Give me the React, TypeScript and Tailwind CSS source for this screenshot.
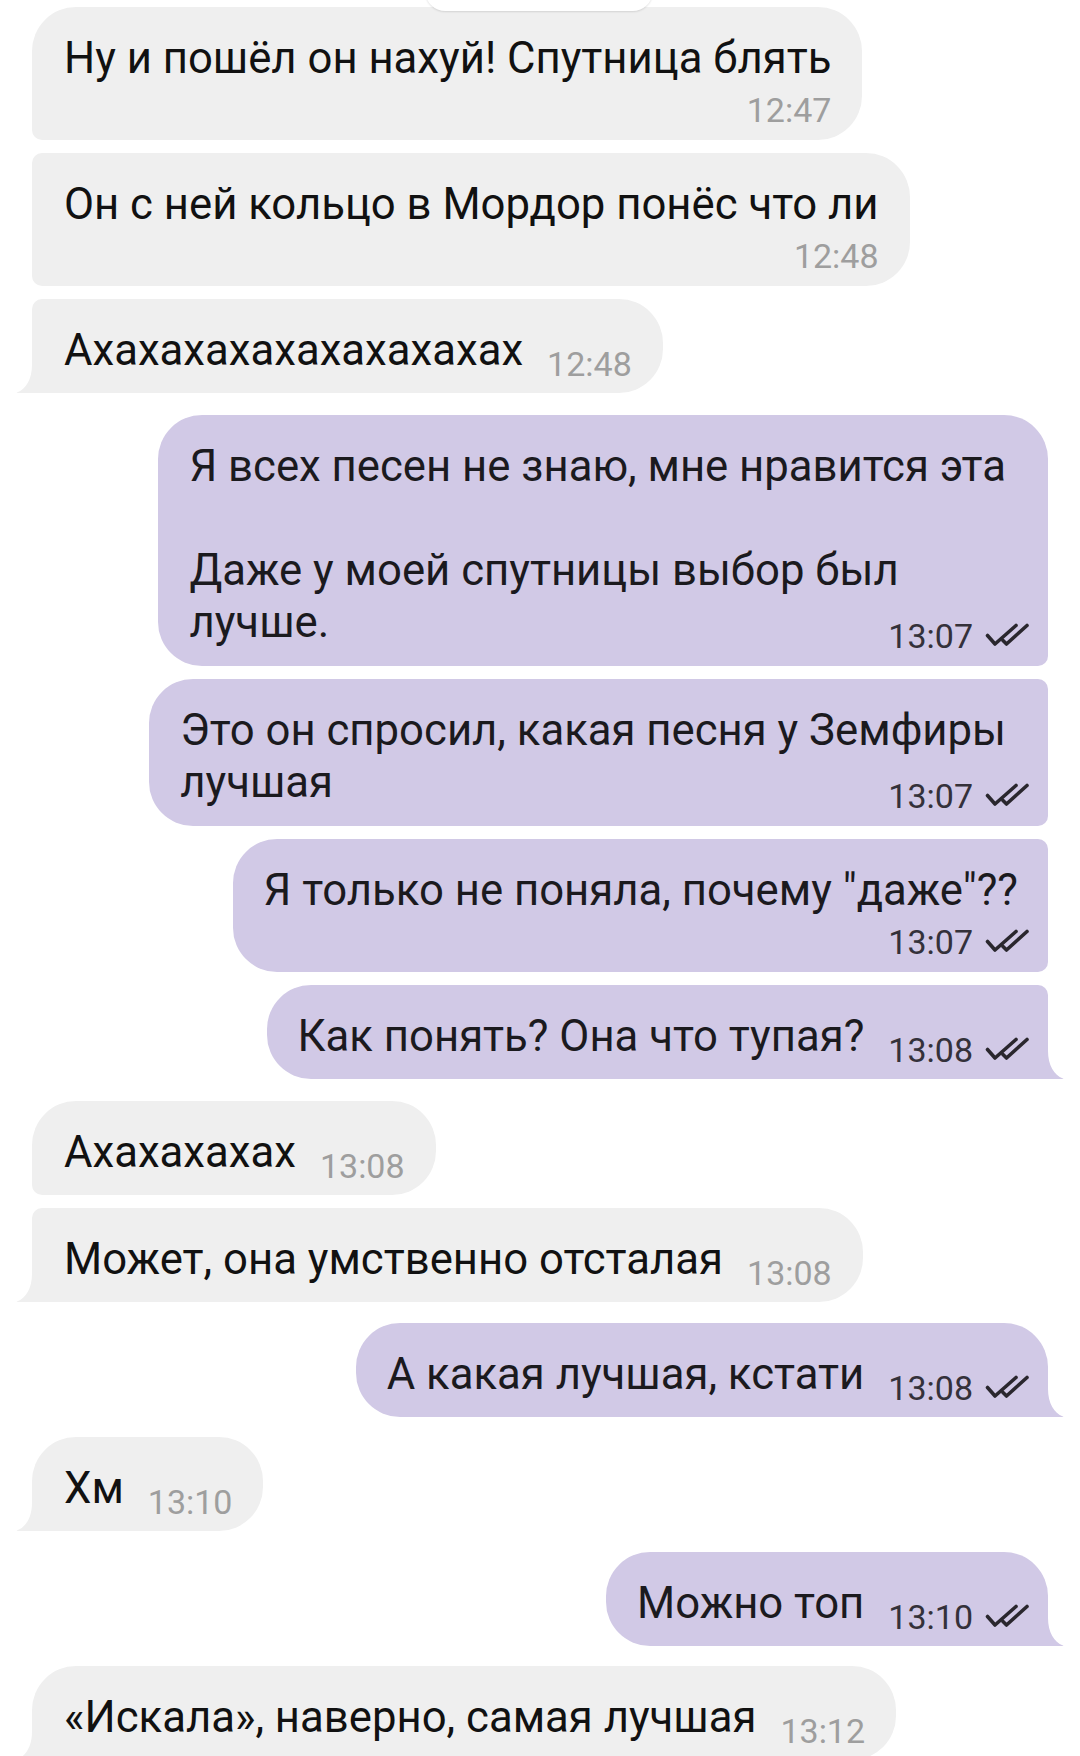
import React from 'react';

type Side = 'in' | 'out';
type Pos = 'first' | 'middle' | 'last' | 'single';
type Layout = 'inline' | 'stacked' | 'overlap';

interface Message {
  side: Side;
  text: string;
  time: string;
  layout: Layout;
  pos: Pos;
  gap: string;
}

const messages: Message[] = [
  { side: 'in', text: 'Ну и пошёл он нахуй! Спутница блять', time: '12:47', layout: 'stacked', pos: 'first', gap: '' },
  { side: 'in', text: 'Он с ней кольцо в Мордор понёс что ли', time: '12:48', layout: 'stacked', pos: 'middle', gap: 'mt-[13px]' },
  { side: 'in', text: 'Ахахахахахахахахахах', time: '12:48', layout: 'inline', pos: 'last', gap: 'mt-[13px]' },
  { side: 'out', text: 'Я всех песен не знаю, мне нравится эта\n\nДаже у моей спутницы выбор был\nлучше.', time: '13:07', layout: 'overlap', pos: 'first', gap: 'mt-[22px]' },
  { side: 'out', text: 'Это он спросил, какая песня у Земфиры\nлучшая', time: '13:07', layout: 'overlap', pos: 'middle', gap: 'mt-[13px]' },
  { side: 'out', text: 'Я только не поняла, почему "даже"??', time: '13:07', layout: 'stacked', pos: 'middle', gap: 'mt-[13px]' },
  { side: 'out', text: 'Как понять? Она что тупая?', time: '13:08', layout: 'inline', pos: 'last', gap: 'mt-[13px]' },
  { side: 'in', text: 'Ахахахахах', time: '13:08', layout: 'inline', pos: 'first', gap: 'mt-[22px]' },
  { side: 'in', text: 'Может, она умственно отсталая', time: '13:08', layout: 'inline', pos: 'last', gap: 'mt-[13px]' },
  { side: 'out', text: 'А какая лучшая, кстати', time: '13:08', layout: 'inline', pos: 'single', gap: 'mt-[21px]' },
  { side: 'in', text: 'Хм', time: '13:10', layout: 'inline', pos: 'single', gap: 'mt-[20px]' },
  { side: 'out', text: 'Можно топ', time: '13:10', layout: 'inline', pos: 'single', gap: 'mt-[21px]' },
  { side: 'in', text: '«Искала», наверно, самая лучшая', time: '13:12', layout: 'inline', pos: 'single', gap: 'mt-[20px]' },
];

const radiusFor = (side: Side, pos: Pos) => {
  if (side === 'in') {
    switch (pos) {
      case 'first':
        return 'rounded-tl-[44px] rounded-tr-[44px] rounded-br-[44px] rounded-bl-[10px]';
      case 'middle':
        return 'rounded-tl-[10px] rounded-tr-[44px] rounded-br-[44px] rounded-bl-[10px]';
      case 'last':
        return 'rounded-tl-[10px] rounded-tr-[44px] rounded-br-[44px] rounded-bl-none';
      default:
        return 'rounded-tl-[44px] rounded-tr-[44px] rounded-br-[44px] rounded-bl-none';
    }
  }
  switch (pos) {
    case 'first':
      return 'rounded-tl-[44px] rounded-tr-[44px] rounded-br-[10px] rounded-bl-[44px]';
    case 'middle':
      return 'rounded-tl-[44px] rounded-tr-[10px] rounded-br-[10px] rounded-bl-[44px]';
    case 'last':
      return 'rounded-tl-[44px] rounded-tr-[10px] rounded-br-none rounded-bl-[44px]';
    default:
      return 'rounded-tl-[44px] rounded-tr-[44px] rounded-br-none rounded-bl-[44px]';
  }
};

function DoubleCheck() {
  return (
    <svg className="w-[44px] h-[24px] mb-[4px]" viewBox="0 0 44 24" fill="none" stroke="#2a272e" strokeWidth={3.6} strokeLinecap="round" strokeLinejoin="round">
      <path d="M2.5 12.5 L10 21 L31 2.5" />
      <path d="M18 17.5 L21.5 21 L42 2.5" />
    </svg>
  );
}

function Tail({ side }: { side: Side }) {
  if (side === 'in') {
    return (
      <svg className="absolute left-[-16px] bottom-0 w-[18px] h-[28px] fill-[#efefef]" viewBox="0 0 18 28">
        <path d="M16 0 C16 14 10 24 1 27.5 Q0 28 1.5 28 L18 28 L18 0 Z" />
      </svg>
    );
  }
  return (
    <svg className="absolute right-[-16px] bottom-0 w-[18px] h-[28px] fill-[#d1c9e6]" viewBox="0 0 18 28">
      <path d="M2 0 C2 14 8 24 17 27.5 Q18 28 16.5 28 L0 28 L0 0 Z" />
    </svg>
  );
}

function Time({ side, time }: { side: Side; time: string }) {
  if (side === 'in') {
    return <span className="text-[34px] leading-[39px] text-[#9e9e9e]">{time}</span>;
  }
  return (
    <span className="flex items-center gap-[12px] text-[34px] leading-[39px] text-[#34313a]">
      {time}
      <DoubleCheck />
    </span>
  );
}

function Bubble({ msg }: { msg: Message }) {
  const bg = msg.side === 'in' ? 'bg-[#efefef]' : 'bg-[#d1c9e6]';
  const padX = msg.side === 'in' ? 'pl-[32px] pr-[31px]' : 'pl-[31px] pr-[19px]';
  const textCls = `text-[43.7px] leading-[52px] whitespace-pre ${msg.side === 'in' ? 'text-[#111111]' : 'text-[#1b1a1e]'}`;
  const hasTail = msg.pos === 'last' || msg.pos === 'single';

  let body: React.ReactNode;
  let padB = 'pb-[17px]';

  if (msg.layout === 'inline') {
    body = (
      <div className="flex items-end">
        <span className={textCls}>{msg.text}</span>
        <div className="ml-[24px] -mb-[8px]">
          <Time side={msg.side} time={msg.time} />
        </div>
      </div>
    );
  } else if (msg.layout === 'stacked') {
    padB = 'pb-[10px]';
    body = (
      <div className="flex flex-col">
        <span className={`${textCls} ${msg.side === 'out' ? 'mr-[11px]' : ''}`}>{msg.text}</span>
        <div className="self-end mt-[7px]">
          <Time side={msg.side} time={msg.time} />
        </div>
      </div>
    );
  } else {
    // time shares the row of the last (short) line
    padB = 'pb-[18px]';
    const lines = msg.text.split('\n');
    const last = lines.pop() ?? '';
    body = (
      <div className="flex flex-col">
        <div className={`${textCls} mr-[23px]`}>{lines.join('\n')}</div>
        <div className="flex items-end justify-between">
          <span className={textCls}>{last}</span>
          <div className="-mb-[8px]">
            <Time side={msg.side} time={msg.time} />
          </div>
        </div>
      </div>
    );
  }

  return (
    <div className={`relative ${bg} ${radiusFor(msg.side, msg.pos)} ${padX} pt-[25px] ${padB}`}>
      {body}
      {hasTail && <Tail side={msg.side} />}
    </div>
  );
}

export default function App() {
  return (
    <div className="relative w-[1080px] h-[1756px] overflow-hidden bg-white font-['Roboto',sans-serif]">
      <div className="flex flex-col px-[32px] pt-[7px]">
        {messages.map((msg, i) => (
          <div key={i} className={`flex ${msg.side === 'in' ? 'justify-start' : 'justify-end'} ${msg.gap}`}>
            <Bubble msg={msg} />
          </div>
        ))}
      </div>

      {/* chip scrolled off at the top */}
      <div className="absolute left-[425px] top-[-30px] w-[228px] h-[41px] rounded-full bg-white shadow-[0_1px_2px_rgba(0,0,0,0.12)]" />
    </div>
  );
}
